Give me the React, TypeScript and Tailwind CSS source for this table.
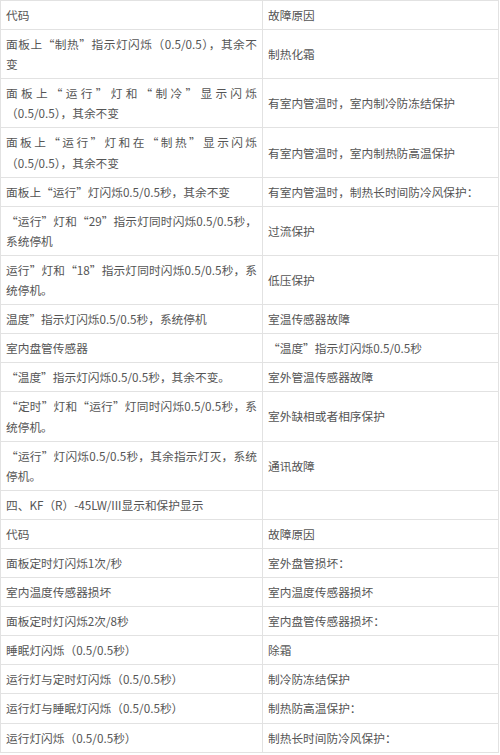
const rows: [string, string][] = [
  ["代码", "故障原因"],
  ["面板上“制热”指示灯闪烁（0.5/0.5），其余不变", "制热化霜"],
  ["面板上“运行”灯和“制冷”显示闪烁（0.5/0.5），其余不变", "有室内管温时，室内制冷防冻结保护"],
  ["面板上“运行”灯和在“制热”显示闪烁（0.5/0.5），其余不变", "有室内管温时，室内制热防高温保护"],
  ["面板上“运行”灯闪烁0.5/0.5秒，其余不变", "有室内管温时，制热长时间防冷风保护："],
  ["“运行”灯和“29”指示灯同时闪烁0.5/0.5秒，系统停机", "过流保护"],
  ["运行”灯和“18”指示灯同时闪烁0.5/0.5秒，系统停机。", "低压保护"],
  ["温度”指示灯闪烁0.5/0.5秒，系统停机", "室温传感器故障"],
  ["室内盘管传感器", "“温度”指示灯闪烁0.5/0.5秒"],
  ["“温度”指示灯闪烁0.5/0.5秒，其余不变。", "室外管温传感器故障"],
  ["“定时”灯和“运行”灯同时闪烁0.5/0.5秒，系统停机。", "室外缺相或者相序保护"],
  ["“运行”灯闪烁0.5/0.5秒，其余指示灯灭，系统停机。", "通讯故障"],
  ["四、KF（R）-45LW/III显示和保护显示", ""],
  ["代码", "故障原因"],
  ["面板定时灯闪烁1次/秒", "室外盘管损坏："],
  ["室内温度传感器损坏", "室内温度传感器损坏"],
  ["面板定时灯闪烁2次/8秒", "室内盘管传感器损坏："],
  ["睡眠灯闪烁（0.5/0.5秒）", "除霜"],
  ["运行灯与定时灯闪烁（0.5/0.5秒）", "制冷防冻结保护"],
  ["运行灯与睡眠灯闪烁（0.5/0.5秒）", "制热防高温保护："],
  ["运行灯闪烁（0.5/0.5秒）", "制热长时间防冷风保护："],
];

export default function App() {
  return (
    <div className="w-[500px] bg-white font-['Noto_Sans_CJK_SC','Microsoft_YaHei',sans-serif] text-[11.7px] leading-[20.1px] text-[#555]">
      <table className="w-[499px] table-fixed border-collapse">
        <colgroup>
          <col className="w-[262px]" />
          <col />
        </colgroup>
        <tbody>
          {rows.map(([a, b], i) => (
            <tr key={i}>
              <td className="border border-[#e2e2e2] px-[5px] py-[4px] text-justify align-middle">{a}</td>
              <td className="border border-[#e2e2e2] px-[5px] py-[4px] text-justify align-middle">{b}</td>
            </tr>
          ))}
        </tbody>
      </table>
    </div>
  );
}
